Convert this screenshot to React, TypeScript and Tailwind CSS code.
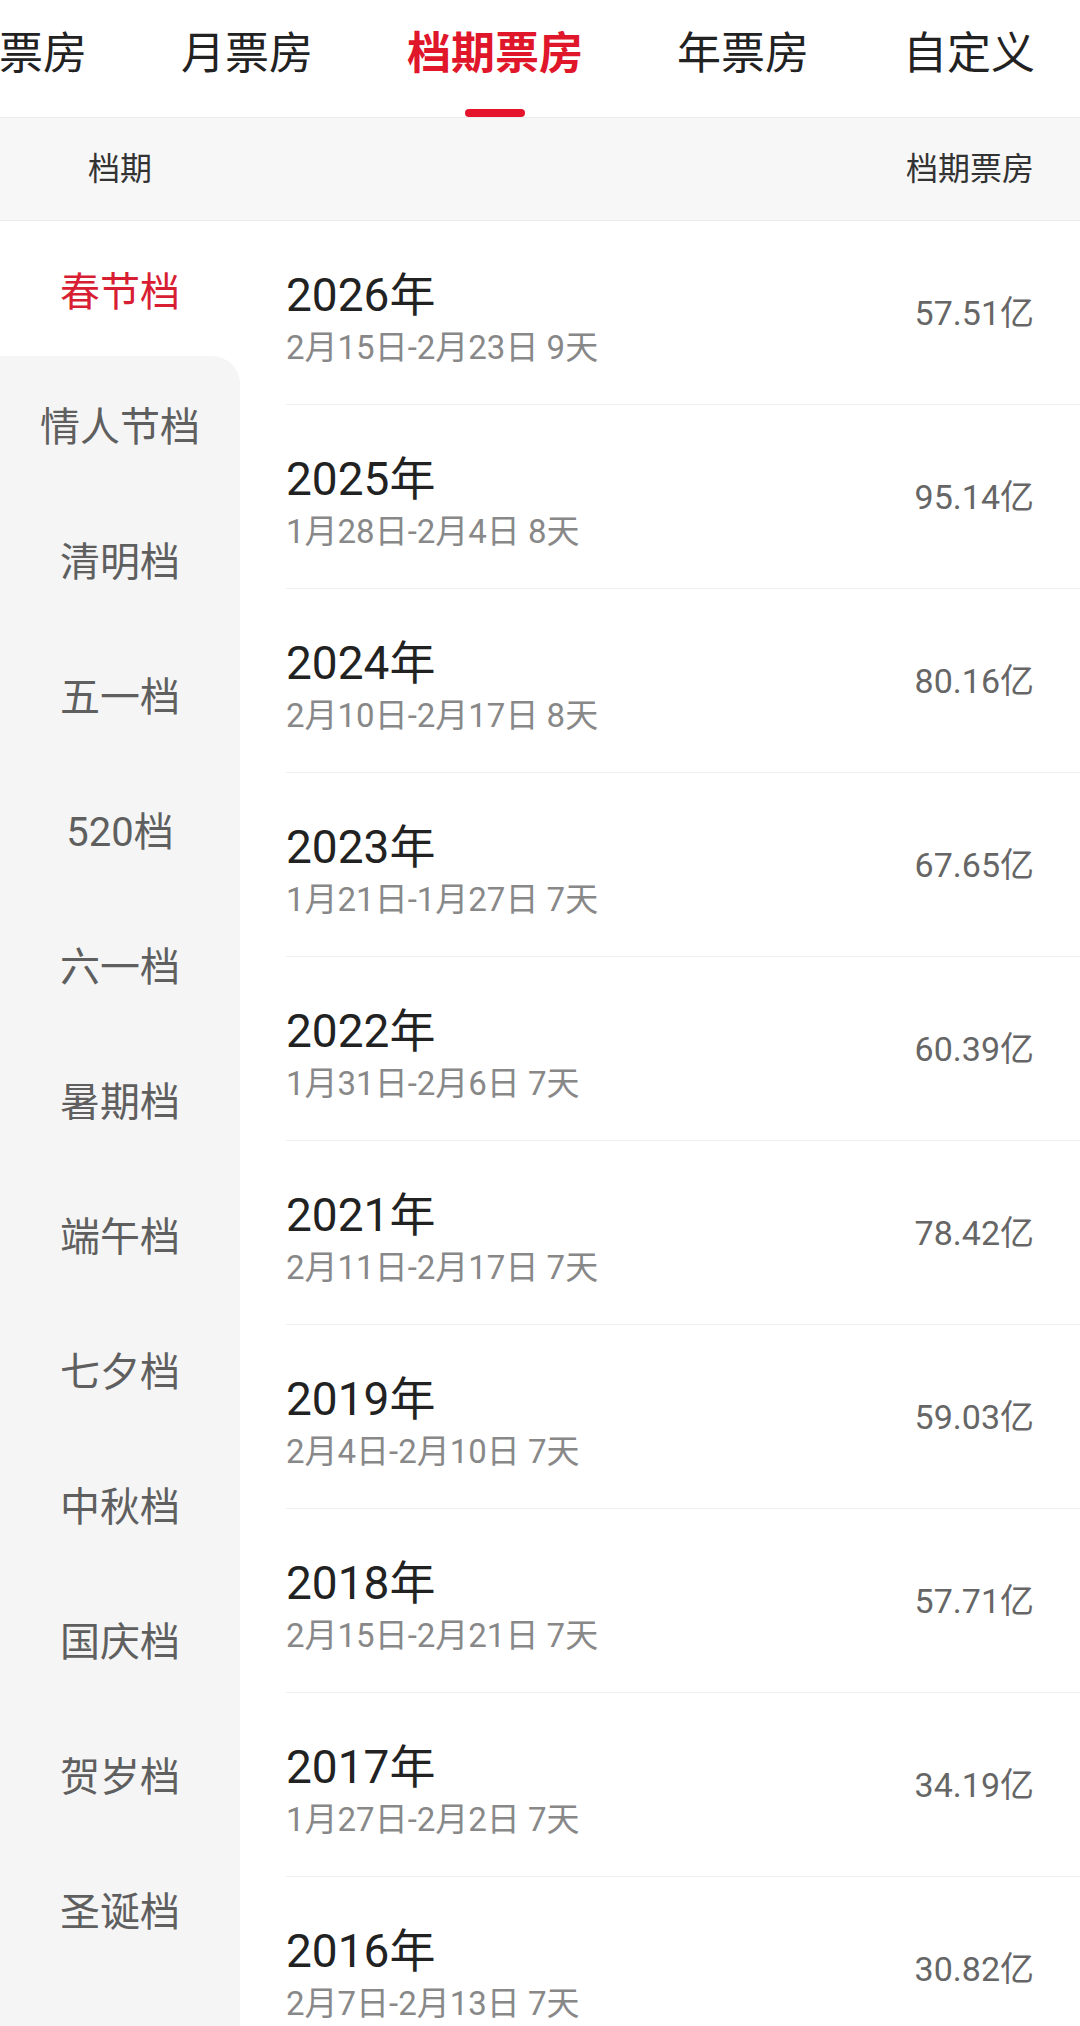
import React from 'react';

const FONT = { fontFamily: 'Roboto, "Noto Sans CJK SC", sans-serif' };

const tabs = ['日票房', '周票房', '月票房', '档期票房', '年票房', '自定义'];
const activeTab = '档期票房';

const seasons = [
  '春节档', '情人节档', '清明档', '五一档', '520档', '六一档', '暑期档',
  '端午档', '七夕档', '中秋档', '国庆档', '贺岁档', '圣诞档',
];

const rows = [
  { year: '2026年', range: '2月15日-2月23日 9天', box: '57.51亿' },
  { year: '2025年', range: '1月28日-2月4日 8天', box: '95.14亿' },
  { year: '2024年', range: '2月10日-2月17日 8天', box: '80.16亿' },
  { year: '2023年', range: '1月21日-1月27日 7天', box: '67.65亿' },
  { year: '2022年', range: '1月31日-2月6日 7天', box: '60.39亿' },
  { year: '2021年', range: '2月11日-2月17日 7天', box: '78.42亿' },
  { year: '2019年', range: '2月4日-2月10日 7天', box: '59.03亿' },
  { year: '2018年', range: '2月15日-2月21日 7天', box: '57.71亿' },
  { year: '2017年', range: '1月27日-2月2日 7天', box: '34.19亿' },
  { year: '2016年', range: '2月7日-2月13日 7天', box: '30.82亿' },
];

// tab strip is scrolled so the first visible tab is cut at the left edge
const Tabs: React.FC = () => (
  <div className="h-[118px] overflow-hidden border-b border-[#ededed] bg-white">
    <div className="flex h-full ml-[-271px] gap-[94px] whitespace-nowrap">
      {tabs.map(t => {
        const active = t === activeTab;
        return (
          <div key={t} className="relative flex h-full items-center pb-[9px]">
            <span
              className={`text-[44px] leading-none ${active ? 'font-bold text-[#e0162b]' : 'text-[#222222]'}`}
            >
              {t}
            </span>
            {active && (
              <div className="absolute bottom-0 left-1/2 h-[8px] w-[60px] -translate-x-1/2 rounded-full bg-[#e5132b]" />
            )}
          </div>
        );
      })}
    </div>
  </div>
);

const Sidebar: React.FC<{ active: number }> = ({ active }) => (
  <div className="flex w-[240px] shrink-0 flex-col bg-white">
    {seasons.map((s, i) => {
      const isActive = i === active;
      const afterActive = i === active + 1;
      const beforeActive = i === active - 1;
      return (
        <div
          key={s}
          className={`flex h-[135px] items-center justify-center pt-[8px] ${
            isActive ? 'bg-white' : 'bg-[#f5f5f5]'
          } ${afterActive ? 'rounded-tr-[28px]' : ''} ${beforeActive ? 'rounded-br-[28px]' : ''}`}
        >
          <span className={`text-[40px] leading-none ${isActive ? 'text-[#d81e33]' : 'text-[#5f5f5f]'}`}>
            {s}
          </span>
        </div>
      );
    })}
    <div className="flex-1 bg-[#f5f5f5]" />
  </div>
);

export default function App() {
  return (
    <div className="h-[2026px] w-[1080px] overflow-hidden bg-white" style={FONT}>
      <Tabs />

      <div className="flex h-[103px] items-center justify-between border-b border-[#ebebeb] bg-[#f7f7f7] pl-[88px] pr-[46px]">
        <span className="text-[32px] leading-none text-[#333333]">档期</span>
        <span className="text-[32px] leading-none text-[#333333]">档期票房</span>
      </div>

      <div className="flex">
        <Sidebar active={0} />

        <div className="ml-[46px] flex-1">
          {rows.map(r => (
            <div key={r.year} className="flex h-[184px] justify-between border-b border-[#eeeeee] pr-[46px]">
              <div className="pt-[46px]">
                <div className="text-[46px] leading-[56px] text-[#222222]">{r.year}</div>
                <div className="mt-[3px] text-[33px] leading-[44px] text-[#888888]">{r.range}</div>
              </div>
              <div className="self-center text-[34px] leading-none text-[#666666]">{r.box}</div>
            </div>
          ))}
        </div>
      </div>
    </div>
  );
}
